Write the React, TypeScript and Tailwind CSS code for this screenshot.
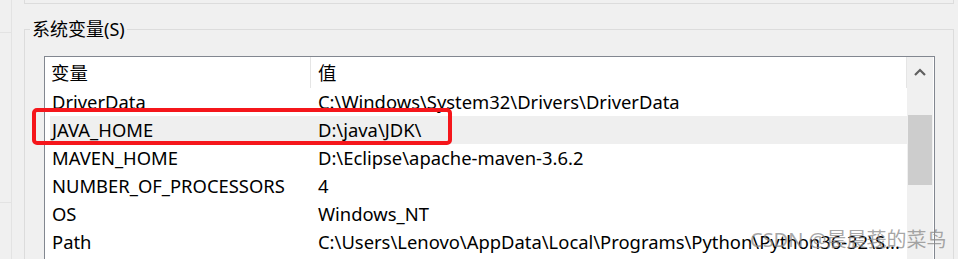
import React from "react";

const rows: { name: string; value: string; selected?: boolean }[] = [
  { name: "DriverData", value: "C:\\Windows\\System32\\Drivers\\DriverData" },
  { name: "JAVA_HOME", value: "D:\\java\\JDK\\", selected: true },
  { name: "MAVEN_HOME", value: "D:\\Eclipse\\apache-maven-3.6.2" },
  { name: "NUMBER_OF_PROCESSORS", value: "4" },
  { name: "OS", value: "Windows_NT" },
  { name: "Path", value: "C:\\Users\\Lenovo\\AppData\\Local\\Programs\\Python\\Python36-32\\S..." },
];

export default function App() {
  return (
    <div
      className="relative w-[958px] h-[259px] overflow-hidden bg-[#f0f0f0] text-[18.4px] text-black"
      style={{ fontFamily: '"Noto Sans", "Noto Sans CJK SC", sans-serif' }}
    >
      {/* faint background window edges on the left */}
      <div className="absolute left-[11px] top-0 h-[259px] w-px bg-[#e3e3e3]" />
      <div className="absolute left-0 top-[32px] h-px w-[11px] bg-[#e3e3e3]" />
      <div className="absolute left-0 top-[202px] h-px w-[11px] bg-[#e3e3e3]" />

      {/* upper group box (bottom edge) */}
      <div className="ml-[24px] h-[4px] w-[930px] border-x border-b border-[#dcdcdc]" />

      {/* 系统变量 group box */}
      <div className="relative ml-[24px] mt-[25px] w-[930px] h-[300px] border border-[#dcdcdc]">
        <div className="absolute left-[5px] top-[-12px] bg-[#f0f0f0] px-[2px] leading-[22px] text-[18px]">
          系统变量(S)
        </div>

        {/* list view */}
        <div className="ml-[19px] mt-[26px] flex h-[260px] w-[891px] border border-[#828790] bg-white">
          <div className="flex w-[862px] flex-col">
            {/* header */}
            <div className="flex h-[31px] items-center">
              <div className="flex h-full w-[266px] items-center border-r border-[#e5e5e5] pl-[6px]">
                变量
              </div>
              <div className="flex h-full flex-1 items-center border-r border-[#e5e5e5] pl-[7px]">
                值
              </div>
            </div>
            {rows.map((r) => (
              <div
                key={r.name}
                className={`ml-[5px] flex h-[28px] items-center whitespace-nowrap ${
                  r.selected ? "bg-[#efefef]" : ""
                }`}
              >
                <div className="w-[261px] pl-[2px]">{r.name}</div>
                <div className="pl-[7px]">{r.value}</div>
              </div>
            ))}
          </div>
          {/* scrollbar */}
          <div className="flex w-[26px] flex-col bg-[#f0f0f0]">
            <div className="flex h-[30px] items-center justify-center">
              <svg width="12" height="8" viewBox="0 0 12 8">
                <path d="M1 7 L6 2 L11 7" stroke="#606060" strokeWidth="2.2" fill="none" />
              </svg>
            </div>
            <div className="mt-[28px] ml-px h-[70px] w-[24px] bg-[#cdcdcd]" />
          </div>
        </div>
      </div>

      {/* red annotation box */}
      <div className="absolute left-[32px] top-[108px] h-[37px] w-[420px] rounded-[5px] border-[4px] border-[#f5161b]" />

      {/* watermark */}
      <div
        className="absolute left-[750px] top-[226px] text-[20px] leading-[28px] text-[#8a8a8a]/75 whitespace-nowrap"
        style={{ fontFamily: '"Noto Sans", "Noto Sans CJK SC", sans-serif' }}
      >
        CSDN @晨晨莪的菜鸟
      </div>
    </div>
  );
}
